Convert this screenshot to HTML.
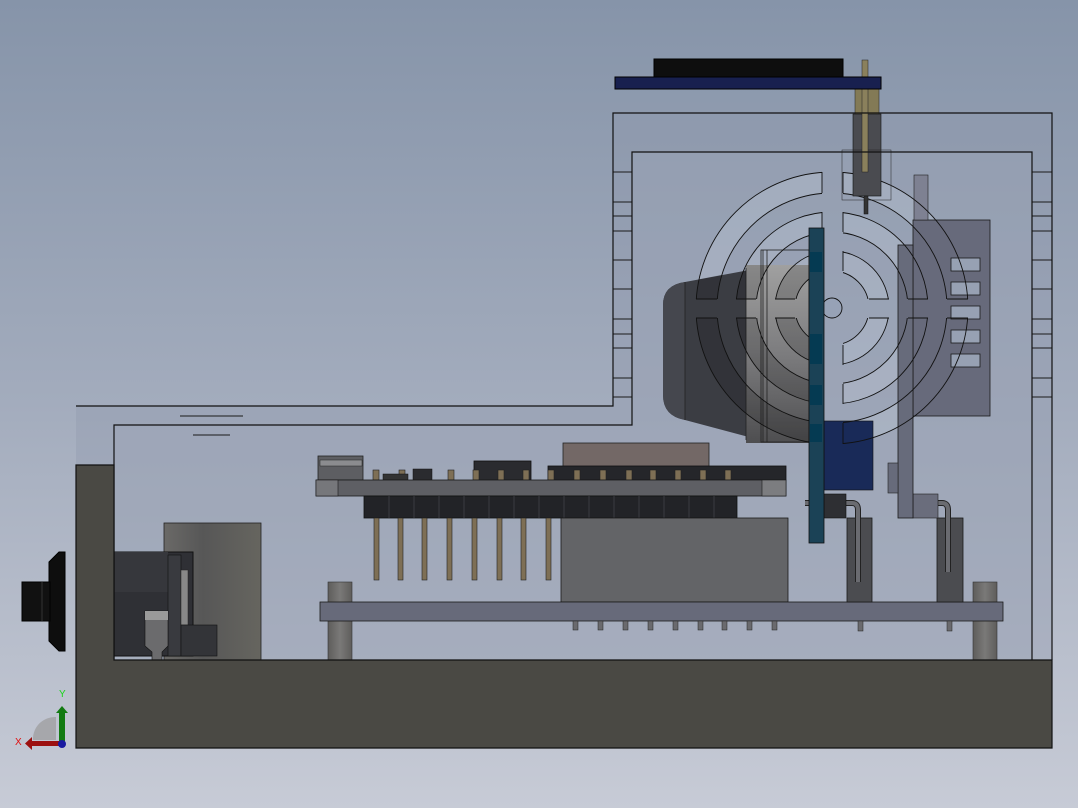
<!DOCTYPE html>
<html><head><meta charset="utf-8"><style>
html,body{margin:0;padding:0}
body{width:1078px;height:808px;overflow:hidden;background:linear-gradient(180deg,#8694a9 0%,#a3acbd 50%,#c7cbd6 100%);font-family:"Liberation Sans",sans-serif}
svg{display:block}
</style></head><body>
<svg width="1078" height="808" viewBox="0 0 1078 808" xmlns="http://www.w3.org/2000/svg">
<defs>
<linearGradient id="cyl" x1="0" x2="1"><stop offset="0" stop-color="#6a6967"/><stop offset=".4" stop-color="#575757"/><stop offset="1" stop-color="#66655f"/></linearGradient>
<linearGradient id="std" x1="0" x2="1"><stop offset="0" stop-color="#5e5d5b"/><stop offset=".5" stop-color="#7a7978"/><stop offset="1" stop-color="#5e5d5b"/></linearGradient>
<linearGradient id="gbody" x1="0" x2="0" y1="0" y2="1"><stop offset="0" stop-color="#a0a0a0"/><stop offset=".5" stop-color="#7c7c7e"/><stop offset="1" stop-color="#4e4e50"/></linearGradient>
<mask id="spk"><rect width="1078" height="808" fill="#fff"/><rect x="822" y="150" width="21" height="320" fill="#000"/><rect x="680" y="299" width="310" height="19" fill="#000"/></mask>
<clipPath id="cz"><path d="M685 282L746 270V265H809V443H746V440L685 420Q663 416 663 395V305Q663 285 685 282Z"/></clipPath>
</defs>

<path d="M76 406H613V113H1052V660H76Z" fill="#8f99ab" fill-opacity=".35"/>
<path d="M114 425H632V152H1032V660H114Z" fill="#9ea7b8" fill-opacity=".35"/>

<g stroke="#1a1a1a" stroke-width="1">
<path d="M613 172H632M613 202H632M613 216H632M613 231H632M613 260H632M613 289H632M613 319H632M613 334H632M613 348H632M613 378H632M613 397H632"/>
<path d="M1032 172H1052M1032 202H1052M1032 216H1052M1032 231H1052M1032 260H1052M1032 289H1052M1032 319H1052M1032 334H1052M1032 348H1052M1032 378H1052M1032 397H1052"/>
<path d="M180 416H243M193 435H230"/>
</g>

<rect x="164" y="523" width="97" height="137" fill="url(#cyl)" stroke="#222" stroke-width=".8"/>
<rect x="328" y="582" width="24" height="78" fill="url(#std)" stroke="#333" stroke-width=".6"/>
<rect x="973" y="582" width="24" height="78" fill="url(#std)" stroke="#333" stroke-width=".6"/>

<rect x="114" y="552" width="79" height="104" fill="#2f3035" stroke="#111"/>
<rect x="114" y="552" width="54" height="40" fill="#36373c"/>
<rect x="168" y="555" width="13" height="101" fill="#393a3f" stroke="#111" stroke-width=".6"/>
<rect x="181" y="570" width="7" height="55" fill="#888" stroke="#222" stroke-width=".5"/>
<rect x="181" y="625" width="36" height="31" fill="#333438" stroke="#111" stroke-width=".6"/>
<path d="M145 611H168V646L162 652V660H152V652L145 646Z" fill="#6b6b6d" stroke="#111" stroke-width=".6"/>
<rect x="145" y="611" width="23" height="9" fill="#9a9a9a"/>

<path d="M49 562L59 552H65V651H59L49 641Z" fill="#0e0e0e" stroke="#000"/>
<rect x="22" y="582" width="28" height="39" fill="#111" stroke="#000"/>
<path d="M42 582V621" stroke="#333"/>

<rect x="563" y="443" width="146" height="25" fill="#736866" stroke="#222" stroke-width=".8"/>
<rect x="474" y="461" width="57" height="19" fill="#2a2b2f" stroke="#111" stroke-width=".8"/>
<rect x="548" y="466" width="238" height="14" fill="#25262a" stroke="#111" stroke-width=".8"/>
<rect x="318" y="456" width="45" height="24" fill="#5d5e62" stroke="#222" stroke-width=".8"/>
<rect x="320" y="460" width="42" height="6" fill="#8b8c8f" stroke="#222" stroke-width=".5"/>
<g fill="#7e6f55" stroke="#222" stroke-width=".6">
<rect x="373" y="470" width="6" height="10"/><rect x="399" y="470" width="6" height="10"/><rect x="423" y="470" width="6" height="10"/><rect x="448" y="470" width="6" height="10"/><rect x="473" y="470" width="6" height="10"/><rect x="498" y="470" width="6" height="10"/><rect x="523" y="470" width="6" height="10"/><rect x="548" y="470" width="6" height="10"/>
<rect x="574" y="470" width="6" height="10"/><rect x="600" y="470" width="6" height="10"/><rect x="626" y="470" width="6" height="10"/><rect x="650" y="470" width="6" height="10"/><rect x="675" y="470" width="6" height="10"/><rect x="700" y="470" width="6" height="10"/><rect x="725" y="470" width="6" height="10"/>
</g>
<rect x="413" y="469" width="19" height="11" fill="#2a2b2f" stroke="#111" stroke-width=".5"/>
<rect x="383" y="474" width="25" height="6" fill="#333" stroke="#111" stroke-width=".5"/>

<rect x="316" y="480" width="470" height="16" fill="#5e5f64" stroke="#1a1a1a" stroke-width=".8"/>
<rect x="316" y="480" width="22" height="16" fill="#76777b" stroke="#1a1a1a" stroke-width=".6"/>
<rect x="762" y="480" width="24" height="16" fill="#7c7d80" stroke="#1a1a1a" stroke-width=".6"/>
<rect x="364" y="496" width="373" height="22" fill="#222327" stroke="#111" stroke-width=".8"/>
<g stroke="#3a3b40" stroke-width="1"><path d="M389 496V518M414 496V518M439 496V518M464 496V518M489 496V518M514 496V518M539 496V518M564 496V518M589 496V518M614 496V518M639 496V518M664 496V518M689 496V518M714 496V518"/></g>
<g fill="#7e6f55" stroke="#222" stroke-width=".6">
<rect x="374" y="518" width="5" height="62"/><rect x="398" y="518" width="5" height="62"/><rect x="422" y="518" width="5" height="62"/><rect x="447" y="518" width="5" height="62"/><rect x="472" y="518" width="5" height="62"/><rect x="497" y="518" width="5" height="62"/><rect x="521" y="518" width="5" height="62"/><rect x="546" y="518" width="5" height="62"/>
</g>
<rect x="561" y="518" width="227" height="84" fill="#636467" stroke="#1a1a1a" stroke-width=".8"/>

<rect x="320" y="602" width="683" height="19" fill="#676a7a" stroke="#1a1a1a" stroke-width=".8"/>
<g fill="#6a6a6e" stroke="#222" stroke-width=".5">
<rect x="573" y="621" width="5" height="9"/><rect x="598" y="621" width="5" height="9"/><rect x="623" y="621" width="5" height="9"/><rect x="648" y="621" width="5" height="9"/><rect x="673" y="621" width="5" height="9"/><rect x="698" y="621" width="5" height="9"/><rect x="722" y="621" width="5" height="9"/><rect x="747" y="621" width="5" height="9"/><rect x="772" y="621" width="5" height="9"/><rect x="858" y="621" width="5" height="10"/><rect x="947" y="621" width="5" height="10"/>
</g>

<rect x="847" y="518" width="25" height="84" fill="#4b4c50" stroke="#1a1a1a" stroke-width=".8"/>
<rect x="937" y="518" width="26" height="84" fill="#4b4c50" stroke="#1a1a1a" stroke-width=".8"/>
<path d="M805 503H852Q858 503 858 510V582" fill="none" stroke="#222" stroke-width="6"/>
<path d="M805 503H852Q858 503 858 510V582" fill="none" stroke="#6a6b70" stroke-width="4"/>
<path d="M928 503H942Q948 503 948 510V572" fill="none" stroke="#222" stroke-width="6"/>
<path d="M928 503H942Q948 503 948 510V572" fill="none" stroke="#6a6b70" stroke-width="4"/>
<rect x="824" y="494" width="22" height="24" fill="#2e2f33" stroke="#111" stroke-width=".6"/>
<rect x="913" y="494" width="25" height="24" fill="#6a6d7c" stroke="#222" stroke-width=".6"/>

<!-- light grill bands (visible over background) -->
<g mask="url(#spk)" fill-rule="evenodd" fill="#c4cedc" fill-opacity=".3">
<path d="M832 172a136 136 0 1 0 0.01 0ZM832 193a115 115 0 1 0 0.01 0Z"/>
<path d="M832 212a96 96 0 1 0 0.01 0ZM832 232a76 76 0 1 0 0.01 0Z"/>
<path d="M832 251a57 57 0 1 0 0.01 0ZM832 271a37 37 0 1 0 0.01 0Z"/>
</g>

<!-- speaker cylinder -->
<path d="M685 282L760 268V440L685 420Q663 416 663 395V305Q663 285 685 282Z" fill="#3b3d43"/>
<path d="M685 282Q663 285 663 305V395Q663 416 685 420Z" fill="#45474e"/>
<path d="M685 282V420" stroke="#222" stroke-width=".8"/>
<rect x="746" y="265" width="63" height="178" fill="url(#gbody)"/>
<path d="M746 268V440M763 250V442M767 250V442" stroke="#222" stroke-width=".8"/>
<rect x="761" y="250" width="48" height="192" fill="none" stroke="#222" stroke-width=".8"/>

<!-- right plate / block -->
<rect x="913" y="220" width="77" height="196" fill="#676a7b" stroke="#1a1a1a" stroke-width=".8"/>
<rect x="914" y="175" width="14" height="45" fill="#7e8192" stroke="#222" stroke-width=".6"/>
<g fill="#97a1b3" stroke="#1a1a1a" stroke-width=".8">
<rect x="951" y="258" width="29" height="13"/><rect x="951" y="282" width="29" height="13"/><rect x="951" y="306" width="29" height="13"/><rect x="951" y="330" width="29" height="13"/><rect x="951" y="354" width="29" height="13"/>
</g>
<rect x="898" y="245" width="15" height="273" fill="#676b7b" stroke="#1a1a1a" stroke-width=".8"/>
<rect x="888" y="463" width="10" height="30" fill="#676b7b" stroke="#222" stroke-width=".6"/>

<rect x="824" y="421" width="49" height="69" fill="#192a58" stroke="#111" stroke-width=".6"/>

<!-- dark grill bands over cylinder + outlines -->
<g mask="url(#spk)" fill-rule="evenodd">
<g clip-path="url(#cz)" fill="#000" fill-opacity=".15">
<path d="M832 172a136 136 0 1 0 0.01 0ZM832 193a115 115 0 1 0 0.01 0Z"/>
<path d="M832 212a96 96 0 1 0 0.01 0ZM832 232a76 76 0 1 0 0.01 0Z"/>
<path d="M832 251a57 57 0 1 0 0.01 0ZM832 271a37 37 0 1 0 0.01 0Z"/>
</g>
<g fill="none" stroke="#111" stroke-width=".9">
<circle cx="832" cy="308" r="136"/><circle cx="832" cy="308" r="115"/>
<circle cx="832" cy="308" r="96"/><circle cx="832" cy="308" r="76"/>
<circle cx="832" cy="308" r="57"/><circle cx="832" cy="308" r="37"/>
</g>
</g>
<g stroke="#111" stroke-width=".9">
<path d="M822 172V193M843 172V193M822 212V232M843 212V232M822 251V271M843 251V271M822 345V365M843 345V365M822 384V404M843 384V404M822 423V444M843 423V444"/>
<path d="M696 299H717M696 318H717M736 299H756M736 318H756M775 299H795M775 318H795M869 299H889M869 318H889M908 299H928M908 318H928M947 299H968M947 318H968"/>
</g>
<circle cx="832" cy="308" r="10" fill="#97a2b6" stroke="#111" stroke-width=".9"/>
<rect x="809" y="228" width="15" height="315" fill="#1b4256" stroke="#111" stroke-width=".8"/>
<g fill="#053a52"><rect x="810" y="252" width="12" height="20"/><rect x="810" y="334" width="12" height="30"/><rect x="810" y="385" width="12" height="20"/><rect x="810" y="424" width="12" height="18"/></g>

<rect x="853" y="114" width="28" height="82" fill="#4a4b50" stroke="#111" stroke-width=".6"/>
<rect x="842" y="150" width="49" height="50" fill="none" stroke="#222" stroke-width=".5"/>
<rect x="855" y="89" width="24" height="25" fill="#837a56" stroke="#222" stroke-width=".5"/>
<rect x="862" y="60" width="6" height="112" fill="#8a805c" stroke="#222" stroke-width=".5"/>
<rect x="864" y="196" width="4" height="18" fill="#333" stroke="#111" stroke-width=".5"/>

<rect x="654" y="59" width="189" height="18" fill="#0e0e0e" stroke="#000"/>
<rect x="615" y="77" width="266" height="12" fill="#18204f" stroke="#000"/>

<path d="M76 406H613V113H1052V660" fill="none" stroke="#111" stroke-width="1.2"/>
<path d="M114 660V425H632V152H1032V660" fill="none" stroke="#111" stroke-width="1.2"/>
<path d="M76 465H114V660H1052V748H76Z" fill="#4a4944" stroke="#111" stroke-width="1.2"/>

<path d="M33 740A22 22 0 0 1 56 717V740Z" fill="#a6a7ab"/>
<rect x="59" y="712" width="6" height="30" fill="#127a12"/>
<path d="M56 713L62 706L68 713Z" fill="#127a12"/>
<rect x="30" y="741" width="30" height="5" fill="#9c1010"/>
<path d="M32 737L25 743.5L32 750Z" fill="#9c1010"/>
<circle cx="62" cy="744" r="4" fill="#1a1aa0"/>
<text x="59" y="697" font-size="10" fill="#1bd51b" font-family="Liberation Sans">Y</text>
<text x="15" y="745" font-size="10" fill="#e01010" font-family="Liberation Sans">X</text>
</svg>
</body></html>
